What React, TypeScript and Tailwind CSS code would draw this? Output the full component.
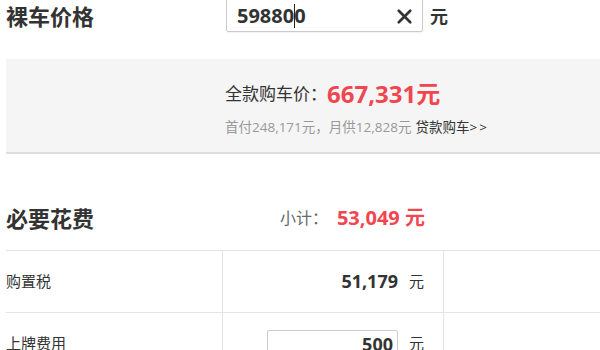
import { X } from 'lucide-react';

const rows = [
  { label: '购置税', value: '51,179', editable: false },
  { label: '上牌费用', value: '500', editable: true },
];

export default function App() {
  return (
    <div className="w-[800px] overflow-hidden bg-white pl-[6px] text-[#333] font-['Open_Sans','Noto_Sans_CJK_SC',sans-serif]">
      {/* bare price */}
      <div className="-mt-[3px] flex h-[35px] items-center">
        <h2 className="w-[220px] pt-[2px] text-[22px] font-bold leading-none">裸车价格</h2>
        <div className="flex h-[35px] w-[197px] items-center rounded-[2px] border border-[#ccc] pl-[10px] pr-[6px] shadow-[0_1px_2px_rgba(0,0,0,0.06)]">
          <span className="relative flex items-center pt-[3px] text-[20px] font-bold leading-none">
            59880
            <span className="-mr-px h-[24px] w-px bg-[#222]" />
            0
          </span>
          <X className="ml-auto mt-[3px] h-[23px] w-[23px] text-[#333]" strokeWidth={2.8} />
        </div>
        <span className="ml-[7px] pt-[3px] text-[18px] font-bold">元</span>
      </div>

      {/* total */}
      <div className="mt-[27px] border-b-2 border-[#ddd] bg-[#f5f5f5] pb-[15px] pl-[219px] pt-[19px]">
        <div className="flex h-[32px] items-center">
          <span className="text-[17px]">全款购车价：</span>
          <span className="text-[24px] font-bold text-[#f04650]">667,331元</span>
        </div>
        <div className="mt-[7px] flex h-[20px] items-center text-[13.5px]">
          <span className="text-[#999]">首付248,171元，月供12,828元</span>
          <span className="ml-[4px] text-[#333]">贷款购车&gt;&thinsp;&gt;</span>
        </div>
      </div>

      {/* required costs */}
      <div className="flex h-[96px] items-end pb-[12px]">
        <div className="flex h-[40px] items-center">
          <h2 className="w-[217px] text-[22px] font-bold">必要花费</h2>
          <div className="flex w-[221px] items-center justify-end pr-[19px]">
            <span className="text-[16px] text-[#666]">小计：</span>
            <span className="ml-[9px] text-[20px] font-bold text-[#f04650]">53,049 元</span>
          </div>
        </div>
      </div>

      <div className="border-t border-[#e5e5e5]">
        {rows.map((r) => (
          <div key={r.label} className="flex h-[62px] border-b border-[#e5e5e5]">
            <div className="flex w-[217px] items-center border-r border-[#e5e5e5] text-[15px]">{r.label}</div>
            <div className="flex w-[221px] items-center justify-end border-r border-[#e5e5e5] pr-[19px]">
              {r.editable ? (
                <div className="mt-[2px] flex h-[30px] w-[131px] items-center justify-end rounded-[2px] border border-[#ccc] pr-[4px] text-[18px] font-bold">
                  {r.value}
                </div>
              ) : (
                <span className="text-[18px] font-bold">{r.value}</span>
              )}
              <span className="ml-[11px] text-[15px]">元</span>
            </div>
            <div className="flex-1" />
          </div>
        ))}
      </div>
    </div>
  );
}
